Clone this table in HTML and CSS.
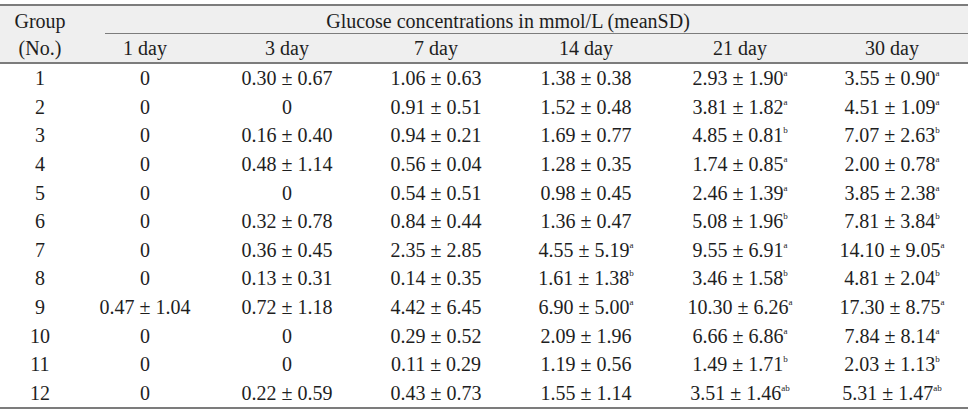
FILE: index.html
```html
<!DOCTYPE html>
<html lang="en">
<head>
<meta charset="utf-8">
<title>Glucose concentrations</title>
<link rel="stylesheet" href="styles.css">
</head>
<body>
<div class="wrap">
<table class="gtable">
<colgroup>
<col class="c-grp"><col class="c-d1"><col class="c-d3"><col class="c-d7"><col class="c-d14"><col class="c-d21"><col class="c-d30">
</colgroup>
<thead>
<tr class="hr1">
<th class="grp-top">Group</th>
<th colspan="6" class="span-cell"><div class="span-title">Glucose concentrations in mmol/L (meanSD)</div></th>
</tr>
<tr class="hr2">
<th>(No.)</th><th>1 day</th><th>3 day</th><th>7 day</th><th>14 day</th><th>21 day</th><th>30 day</th>
</tr>
</thead>
<tbody>
<tr><td>1</td><td>0</td><td>0.30 ± 0.67</td><td>1.06 ± 0.63</td><td>1.38 ± 0.38</td><td>2.93 ± 1.90<sup>a</sup></td><td>3.55 ± 0.90<sup>a</sup></td></tr>
<tr><td>2</td><td>0</td><td>0</td><td>0.91 ± 0.51</td><td>1.52 ± 0.48</td><td>3.81 ± 1.82<sup>a</sup></td><td>4.51 ± 1.09<sup>a</sup></td></tr>
<tr><td>3</td><td>0</td><td>0.16 ± 0.40</td><td>0.94 ± 0.21</td><td>1.69 ± 0.77</td><td>4.85 ± 0.81<sup>b</sup></td><td>7.07 ± 2.63<sup>b</sup></td></tr>
<tr><td>4</td><td>0</td><td>0.48 ± 1.14</td><td>0.56 ± 0.04</td><td>1.28 ± 0.35</td><td>1.74 ± 0.85<sup>a</sup></td><td>2.00 ± 0.78<sup>a</sup></td></tr>
<tr><td>5</td><td>0</td><td>0</td><td>0.54 ± 0.51</td><td>0.98 ± 0.45</td><td>2.46 ± 1.39<sup>a</sup></td><td>3.85 ± 2.38<sup>a</sup></td></tr>
<tr><td>6</td><td>0</td><td>0.32 ± 0.78</td><td>0.84 ± 0.44</td><td>1.36 ± 0.47</td><td>5.08 ± 1.96<sup>b</sup></td><td>7.81 ± 3.84<sup>b</sup></td></tr>
<tr><td>7</td><td>0</td><td>0.36 ± 0.45</td><td>2.35 ± 2.85</td><td>4.55 ± 5.19<sup>a</sup></td><td>9.55 ± 6.91<sup>a</sup></td><td>14.10 ± 9.05<sup>a</sup></td></tr>
<tr><td>8</td><td>0</td><td>0.13 ± 0.31</td><td>0.14 ± 0.35</td><td>1.61 ± 1.38<sup>b</sup></td><td>3.46 ± 1.58<sup>b</sup></td><td>4.81 ± 2.04<sup>b</sup></td></tr>
<tr><td>9</td><td>0.47 ± 1.04</td><td>0.72 ± 1.18</td><td>4.42 ± 6.45</td><td>6.90 ± 5.00<sup>a</sup></td><td>10.30 ± 6.26<sup>a</sup></td><td>17.30 ± 8.75<sup>a</sup></td></tr>
<tr><td>10</td><td>0</td><td>0</td><td>0.29 ± 0.52</td><td>2.09 ± 1.96</td><td>6.66 ± 6.86<sup>a</sup></td><td>7.84 ± 8.14<sup>a</sup></td></tr>
<tr><td>11</td><td>0</td><td>0</td><td>0.11 ± 0.29</td><td>1.19 ± 0.56</td><td>1.49 ± 1.71<sup>b</sup></td><td>2.03 ± 1.13<sup>b</sup></td></tr>
<tr><td>12</td><td>0</td><td>0.22 ± 0.59</td><td>0.43 ± 0.73</td><td>1.55 ± 1.14</td><td>3.51 ± 1.46<sup>ab</sup></td><td>5.31 ± 1.47<sup>ab</sup></td></tr>
</tbody>
</table>
</div>
</body>
</html>
```
FILE: styles.css
```css
html, body {
  margin: 0;
  padding: 0;
  background: #ffffff;
}

.wrap {
  padding-top: 4px;
}

.gtable {
  width: 968px;
  table-layout: fixed;
  border-collapse: separate;
  border-spacing: 0;
  border-top: 2px solid #7c7c7c;
  font-family: "Liberation Serif", "Times New Roman", serif;
  font-size: 20px;
  line-height: 20px;
  color: #1e1e1e;
}

.c-grp { width: 80px; }
.c-d1 { width: 130px; }
.c-d3 { width: 154px; }
.c-d7 { width: 144px; }
.c-d14 { width: 156px; }
.c-d21 { width: 152px; }
.c-d30 { width: 152px; }

.gtable th {
  font-weight: normal;
  text-align: center;
  background: #efefef;
  white-space: nowrap;
}

.hr1 .grp-top {
  padding: 5px 0 3px 0;
}

.hr1 .span-cell {
  padding: 0;
}

.span-title {
  margin-left: 25px;
  padding: 5px 57px 2px 0;
  border-bottom: 1px solid #7c7c7c;
  text-align: center;
}

.hr2 th {
  padding: 4px 0;
  border-bottom: 2px solid #7c7c7c;
}

.gtable td {
  text-align: center;
  padding: 4.3px 0;
  white-space: nowrap;
}

.gtable tbody tr:last-child td {
  border-bottom: 2px solid #7c7c7c;
}

.gtable sup {
  font-size: 9px;
  line-height: 0;
  vertical-align: 9px;
}
```
